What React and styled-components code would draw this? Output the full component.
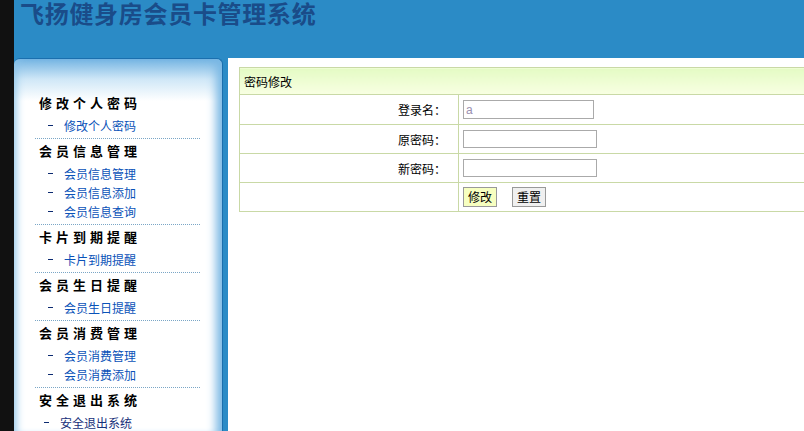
import React from "react";
import styled, { createGlobalStyle } from "styled-components";

const GlobalStyle = createGlobalStyle`
  html, body {
    margin: 0;
    padding: 0;
    background: #111;
    overflow: hidden;
  }
  body {
    font-family: "Liberation Sans", "Noto Sans CJK SC", sans-serif;
    font-size: 12px;
  }
`;

const menu = [
  { title: "修改个人密码", items: ["修改个人密码"] },
  { title: "会员信息管理", items: ["会员信息管理", "会员信息添加", "会员信息查询"] },
  { title: "卡片到期提醒", items: ["卡片到期提醒"] },
  { title: "会员生日提醒", items: ["会员生日提醒"] },
  { title: "会员消费管理", items: ["会员消费管理", "会员消费添加"] },
  { title: "安全退出系统", items: ["安全退出系统"], exit: true },
];

export default function App() {
  return (
    <Page>
      <GlobalStyle />
      <Header>
        <Title>飞扬健身房会员卡管理系统</Title>
      </Header>
      <Main>
        <Sidebar>
          {menu.map((group) => (
            <Group key={group.title}>
              <GroupTitle>{group.title}</GroupTitle>
              {group.items.map((item) => (
                <Item key={item} href="#" $exit={group.exit}>
                  <Dash />
                  {item}
                </Item>
              ))}
            </Group>
          ))}
        </Sidebar>
        <Content>
          <FormTable>
            <tbody>
              <tr>
                <HeadCell colSpan={2}>密码修改</HeadCell>
              </tr>
              <tr>
                <LabelCell $h={29}>登录名：</LabelCell>
                <FieldCell>
                  <Input $w={131} $h={19} defaultValue="a" />
                </FieldCell>
              </tr>
              <tr>
                <LabelCell $h={28}>原密码：</LabelCell>
                <FieldCell>
                  <Input $w={134} $h={18} type="password" />
                </FieldCell>
              </tr>
              <tr>
                <LabelCell $h={28}>新密码：</LabelCell>
                <FieldCell>
                  <Input $w={134} $h={18} type="password" />
                </FieldCell>
              </tr>
              <tr>
                <LabelCell $h={28} />
                <FieldCell>
                  <Button $primary>修改</Button>
                  <Button>重置</Button>
                </FieldCell>
              </tr>
            </tbody>
          </FormTable>
        </Content>
      </Main>
    </Page>
  );
}

const Page = styled.div`
  margin-left: 14px;
  height: 100vh;
  background: #2b8bc6;
  display: flex;
  flex-direction: column;
  overflow: hidden;
`;

const Header = styled.header`
  height: 58px;
  flex: none;
  padding-left: 6px;
  box-sizing: border-box;
`;

const Title = styled.h1`
  margin: 0;
  font-family: "Noto Sans CJK SC", sans-serif;
  font-size: 24px;
  line-height: 25px;
  font-weight: 700;
  letter-spacing: 0.7px;
  color: #1a4c89;
`;

const Main = styled.div`
  flex: 1;
  min-height: 0;
  display: flex;
  gap: 5px;
`;

const Sidebar = styled.nav`
  width: 209px;
  flex: none;
  box-sizing: border-box;
  padding: 32px 22px 0 21px;
  border-top: 1px solid #1b6fae;
  border-right: 1px solid #1b6fae;
  border-radius: 6px 6px 0 0;
  background: linear-gradient(to bottom, #74b4e2 0, #cfe7f7 20px, #fff 42px);
  box-shadow: inset 8px 0 8px -6px #8cc4ea, inset -14px 0 10px -8px #7ab8e4;
`;

const Group = styled.div`
  padding-bottom: 1px;
  border-bottom: 1px dotted #7aa6c6;

  &:last-child {
    border-bottom: none;
  }
`;

const GroupTitle = styled.div`
  height: 24px;
  line-height: 24px;
  margin-bottom: 3px;
  padding-left: 4px;
  font-family: "Noto Sans CJK SC", sans-serif;
  font-size: 13px;
  font-weight: 700;
  letter-spacing: 4px;
  color: #000;
`;

const Item = styled.a`
  display: flex;
  height: 19px;
  line-height: 19px;
  padding-left: ${(p) => (p.$exit ? 9 : 13)}px;
  font-size: 12px;
  color: ${(p) => (p.$exit ? "#17307a" : "#0a52b8")};
  text-decoration: none;
`;

const Dash = styled.span`
  width: 16px;
  height: 19px;
  flex: none;

  &::before {
    content: "";
    display: block;
    width: 5px;
    height: 1px;
    margin-top: 7px;
    background: #0b2a70;
  }
`;

const Content = styled.section`
  flex: 1;
  min-width: 0;
  background: #fff;
  padding: 9px 0 0 11px;
  overflow: hidden;
`;

const FormTable = styled.table`
  width: 620px;
  border-collapse: collapse;
  font-size: 12px;
  color: #000;

  td,
  th {
    border: 1px solid #c9d9a6;
    padding: 0;
  }
`;

const HeadCell = styled.th`
  height: 26px;
  padding: 0 4px !important;
  text-align: left;
  font-weight: normal;
  background: linear-gradient(to bottom, #e4fbc4, #f8ffe2);
`;

const LabelCell = styled.td`
  width: 206px;
  height: ${(p) => p.$h}px;
  padding-right: 12px !important;
  text-align: right;
`;

const FieldCell = styled.td`
  padding-left: 4px !important;
`;

const Input = styled.input`
  display: block;
  width: ${(p) => p.$w}px;
  height: ${(p) => p.$h}px;
  box-sizing: border-box;
  padding: 0 2px;
  border: 1px solid #aaa;
  font: 12px "Liberation Sans", sans-serif;
  color: #9a90b0;
  outline: none;
`;

const Button = styled.button`
  height: 20px;
  padding: 0 4px;
  margin-right: 15px;
  border: 1px solid #999;
  border-radius: 0;
  background: ${(p) => (p.$primary ? "#f7ffc0" : "#f0f0f0")};
  font-family: "Noto Sans CJK SC", sans-serif;
  font-size: 12px;
  line-height: 18px;
  color: #000;
  vertical-align: middle;
`;
